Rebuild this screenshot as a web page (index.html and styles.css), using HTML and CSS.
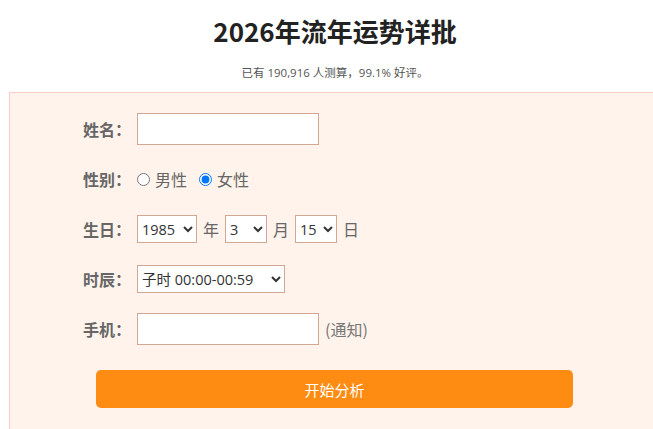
FILE: index.html
```html
<!DOCTYPE html>
<html lang="zh-CN">
<head>
<meta charset="utf-8">
<title>2026年流年运势详批</title>
<link rel="stylesheet" href="styles.css">
</head>
<body>
<div class="page">
  <h1 class="title">2026年流年运势详批</h1>
  <p class="stats">已有 190,916 人测算，99.1% 好评。</p>
  <form class="panel">
    <div class="row">
      <span class="label">姓名：</span>
      <input class="text-input" type="text">
    </div>
    <div class="row">
      <span class="label">性别：</span>
      <label class="radio"><input type="radio" name="sex"> 男性</label>
      <label class="radio"><input type="radio" name="sex" checked> 女性</label>
    </div>
    <div class="row">
      <span class="label">生日：</span>
      <select class="sel sel-year"><option>1985</option></select>
      <span class="unit">年</span>
      <select class="sel sel-small"><option>3</option><option>12</option></select>
      <span class="unit">月</span>
      <select class="sel sel-small"><option>15</option></select>
      <span class="unit">日</span>
    </div>
    <div class="row">
      <span class="label">时辰：</span>
      <select class="sel sel-time"><option>子时 00:00-00:59</option></select>
    </div>
    <div class="row">
      <span class="label">手机：</span>
      <input class="text-input" type="tel">
      <span class="note">(通知)</span>
    </div>
    <button class="submit" type="button">开始分析</button>
  </form>
</div>
</body>
</html>
```
FILE: styles.css
```css
html, body {
  margin: 0;
  padding: 0;
  background: #fff;
  overflow: hidden;
}
body {
  font-family: "Noto Sans CJK SC", "Noto Sans", sans-serif;
  color: #333;
}
.page {
  margin-left: 9px;
  width: 652px;
}
.title {
  margin: 0;
  padding-top: 14px;
  font-size: 26px;
  line-height: 34px;
  font-weight: 700;
  color: #222;
  text-align: center;
}
.stats {
  margin: 17px 0 11px;
  font-family: "Open Sans", "Noto Sans CJK SC", sans-serif;
  font-size: 11.5px;
  line-height: 16px;
  color: #555;
  text-align: center;
}
.panel {
  margin: 0;
  border: 1px solid #ffcccc;
  background: #fff3eb;
  padding: 11px 0 40px;
}
.row {
  display: flex;
  align-items: center;
  height: 50px;
  padding-left: 73px;
  font-size: 16px;
  color: #666;
}
.label {
  font-weight: 700;
  color: #666;
  width: 54px;
  flex: none;
}
.text-input {
  box-sizing: border-box;
  width: 182px;
  height: 32px;
  border: 1px solid #d2a894;
  background: #fff;
  margin: 0;
  padding: 0 6px;
  font-size: 15px;
}
.radio {
  display: flex;
  align-items: center;
  margin-right: 12px;
  color: #666;
}
.radio input {
  margin: 0 5px 0 0;
  width: 13px;
  height: 13px;
}
.sel {
  box-sizing: border-box;
  height: 28px;
  border: 1px solid #d2a894;
  background: #fff;
  margin: 0;
  font-family: "Open Sans", "Noto Sans CJK SC", sans-serif;
  font-size: 14.5px;
  color: #333;
  border-radius: 0;
}
.sel-year { width: 60px; }
.sel-small { width: 42px; }
.sel-time { width: 148px; }
.unit {
  margin: 0 6px;
  color: #666;
}
.note {
  margin-left: 6px;
  color: #777;
}
.submit {
  display: block;
  margin: 16px 0 0 86px;
  width: 477px;
  height: 38px;
  border: none;
  border-radius: 5px;
  background: #ff8c12;
  color: #fff;
  font-family: "Noto Sans CJK SC", "Noto Sans", sans-serif;
  font-size: 15px;
}
```
